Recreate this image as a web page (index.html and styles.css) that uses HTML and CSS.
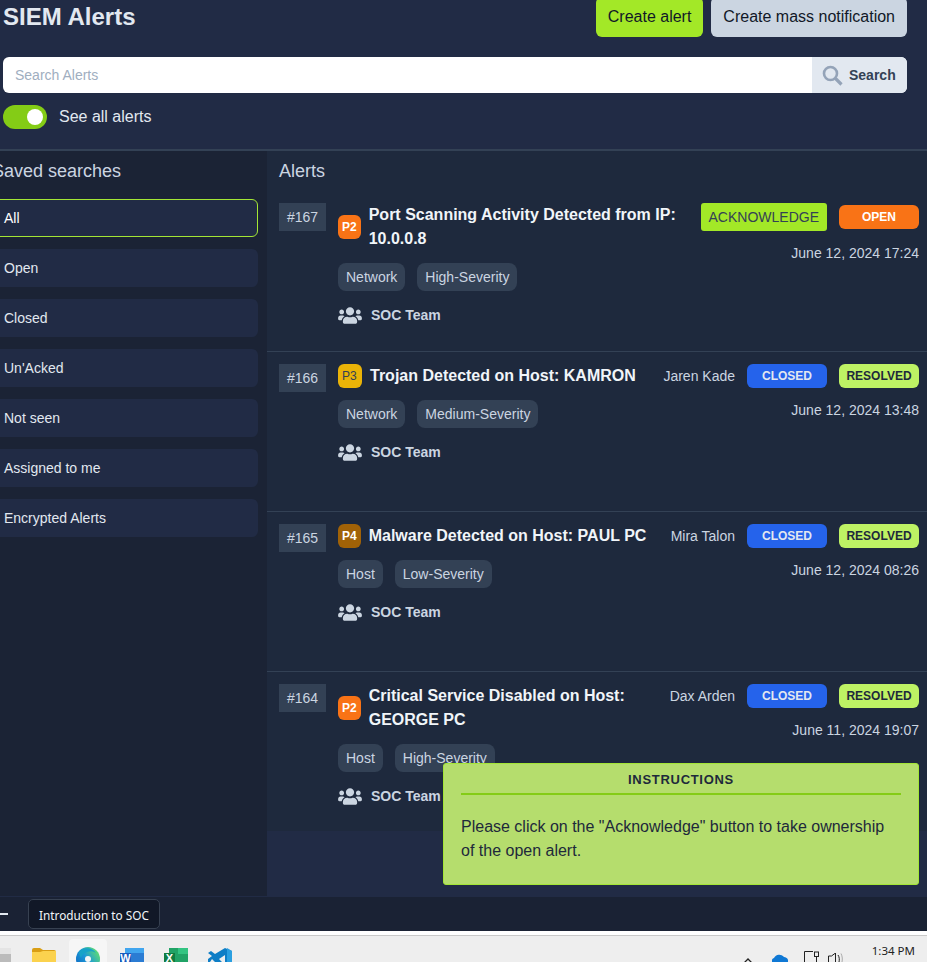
FILE: index.html
```html
<!DOCTYPE html>
<html lang="en">
<head>
    <meta charset="UTF-8">
    <title>SIEM Alerts</title>
    <link rel="stylesheet" href="styles.css">
</head>
<body>
    <svg class="icon-defs" width="0" height="0">
        <defs>
            <linearGradient id="edge-grad" x1="0" y1="1" x2="1" y2="0.3">
                <stop offset="0" stop-color="#0b5fc0"/>
                <stop offset="0.55" stop-color="#1c9ad6"/>
                <stop offset="1" stop-color="#5fdc74"/>
            </linearGradient>
        </defs>
        <symbol id="users" viewBox="0 0 640 512">
            <path d="M96 224c35.3 0 64-28.7 64-64s-28.7-64-64-64-64 28.7-64 64 28.7 64 64 64zm448 0c35.3 0 64-28.7 64-64s-28.7-64-64-64-64 28.7-64 64 28.7 64 64 64zm32 32h-64c-17.6 0-33.5 7.1-45.1 18.6 40.3 22.1 68.9 62 75.1 109.4h66c17.7 0 32-14.3 32-32v-32c0-35.3-28.7-64-64-64zm-256 0c61.9 0 112-50.1 112-112S381.9 32 320 32 208 82.1 208 144s50.1 112 112 112zm76.8 32h-8.3c-20.8 10-43.9 16-68.5 16s-47.6-6-68.5-16h-8.3C179.6 288 128 339.6 128 403.2V432c0 26.5 21.5 48 48 48h288c26.5 0 48-21.5 48-48v-28.8c0-63.6-51.6-115.2-115.2-115.2zm-223.7-13.4C161.5 263.1 145.6 256 128 256H64c-35.3 0-64 28.7-64 64v32c0 17.7 14.3 32 32 32h65.9c6.3-47.4 34.9-87.3 75.2-109.4z"/>
        </symbol>
    </svg>

    <div class="app">
        <!-- Page header -->
        <header class="page-header">
            <div class="title-row">
                <h1>SIEM Alerts</h1>
                <div class="title-buttons">
                    <button class="btn btn-lime">Create alert</button>
                    <button class="btn btn-grey">Create mass notification</button>
                </div>
            </div>
            <div class="search-bar">
                <div class="search-input">Search Alerts</div>
                <div class="search-btn">
                    <svg width="21" height="21" viewBox="0 0 21 21" fill="none" stroke="#94a3b8">
                        <circle cx="8.500" cy="8.500" r="6.500" stroke-width="2.600"/>
                        <path d="M13.500 13.500l6 6" stroke-width="3.200"/>
                    </svg>
                    <span>Search</span>
                </div>
            </div>
            <div class="toggle-row">
                <span class="toggle"><span class="toggle-knob"></span></span>
                <span>See all alerts</span>
            </div>
        </header>

        <main class="main">
            <!-- Saved searches -->
            <aside class="sidebar">
                <h2 class="sidebar-title">Saved searches</h2>
                <ul class="search-list">
                    <li class="search-item active">All</li>
                    <li class="search-item">Open</li>
                    <li class="search-item">Closed</li>
                    <li class="search-item">Un'Acked</li>
                    <li class="search-item">Not seen</li>
                    <li class="search-item">Assigned to me</li>
                    <li class="search-item">Encrypted Alerts</li>
                </ul>
            </aside>

            <!-- Alerts list -->
            <section class="alerts">
                <h2 class="alerts-title">Alerts</h2>

                <article class="alert">
                    <div class="alert-id">#167</div>
                    <div class="alert-body">
                        <div class="alert-head">
                            <span class="priority p2">P2</span>
                            <h3>Port Scanning Activity Detected from IP: 10.0.0.8</h3>
                        </div>
                        <div class="tags"><span class="tag">Network</span><span class="tag">High-Severity</span></div>
                        <div class="team"><svg class="team-icon"><use href="#users"/></svg><span>SOC Team</span></div>
                    </div>
                    <div class="alert-side">
                        <div class="status-row">
                            <button class="ack">ACKNOWLEDGE</button>
                            <span class="status open">OPEN</span>
                        </div>
                        <div class="alert-date">June 12, 2024 17:24</div>
                    </div>
                </article>

                <article class="alert">
                    <div class="alert-id">#166</div>
                    <div class="alert-body">
                        <div class="alert-head">
                            <span class="priority p3">P3</span>
                            <h3>Trojan Detected on Host: KAMRON</h3>
                        </div>
                        <div class="tags"><span class="tag">Network</span><span class="tag">Medium-Severity</span></div>
                        <div class="team"><svg class="team-icon"><use href="#users"/></svg><span>SOC Team</span></div>
                    </div>
                    <div class="alert-side">
                        <div class="status-row">
                            <span class="owner">Jaren Kade</span>
                            <span class="status closed">CLOSED</span>
                            <span class="status resolved">RESOLVED</span>
                        </div>
                        <div class="alert-date">June 12, 2024 13:48</div>
                    </div>
                </article>

                <article class="alert">
                    <div class="alert-id">#165</div>
                    <div class="alert-body">
                        <div class="alert-head">
                            <span class="priority p4">P4</span>
                            <h3>Malware Detected on Host: PAUL PC</h3>
                        </div>
                        <div class="tags"><span class="tag">Host</span><span class="tag">Low-Severity</span></div>
                        <div class="team"><svg class="team-icon"><use href="#users"/></svg><span>SOC Team</span></div>
                    </div>
                    <div class="alert-side">
                        <div class="status-row">
                            <span class="owner">Mira Talon</span>
                            <span class="status closed">CLOSED</span>
                            <span class="status resolved">RESOLVED</span>
                        </div>
                        <div class="alert-date">June 12, 2024 08:26</div>
                    </div>
                </article>

                <article class="alert alert-last">
                    <div class="alert-id">#164</div>
                    <div class="alert-body">
                        <div class="alert-head">
                            <span class="priority p2">P2</span>
                            <h3>Critical Service Disabled on Host: GEORGE PC</h3>
                        </div>
                        <div class="tags"><span class="tag">Host</span><span class="tag">High-Severity</span></div>
                        <div class="team"><svg class="team-icon"><use href="#users"/></svg><span>SOC Team</span></div>
                    </div>
                    <div class="alert-side">
                        <div class="status-row">
                            <span class="owner">Dax Arden</span>
                            <span class="status closed">CLOSED</span>
                            <span class="status resolved">RESOLVED</span>
                        </div>
                        <div class="alert-date">June 11, 2024 19:07</div>
                    </div>
                </article>
            </section>
        </main>

        <!-- Course footer -->
        <footer class="course-bar">
            <span class="course-dash"></span>
            <span class="course-pill">Introduction to SOC</span>
        </footer>

        <!-- Instructions popup -->
        <div class="instructions">
            <div class="instructions-title">INSTRUCTIONS</div>
            <p>Please click on the "Acknowledge" button to take ownership of the open alert.</p>
        </div>
    </div>

    <!-- Windows taskbar -->
    <div class="taskbar">
        <div class="task-icons">
            <span class="task-stub"></span>
            <svg class="task-icon folder" width="24" height="14" viewBox="0 0 24 14">
                <path d="M0 2a2 2 0 0 1 2-2h6l3 2h11a2 2 0 0 1 2 2v2H0z" fill="#d99e14"/>
                <path d="M0 4h8l3-1h13v11H0z" fill="#fbd24e"/>
            </svg>
            <span class="task-active">
                <svg width="24" height="15" viewBox="0 0 24 15">
                    <circle cx="12" cy="12" r="12" fill="url(#edge-grad)"/>
                    <path d="M3 5c4-5 13-5 17 1-3-2-6-2-9-1-3 1-5 3-6 6-1-2-2-4-2-6z" fill="#17a3c8"/>
                    <circle cx="12" cy="12" r="3" fill="#f6f6f6"/>
                </svg>
            </span>
            <svg class="task-icon" width="24" height="14" viewBox="0 0 24 14">
                <path d="M5 0h19v14H5z" fill="#2b7cd3"/>
                <path d="M5 0h19v5H5z" fill="#41a5ee"/>
                <path d="M0 5h11v9H0z" fill="#185abd"/>
                <text x="5.500" y="14" class="office-letter">W</text>
            </svg>
            <svg class="task-icon" width="24" height="14" viewBox="0 0 24 14">
                <path d="M5 0h19v14H5z" fill="#21a366"/>
                <path d="M14 0h10v6H14z" fill="#33c481"/>
                <path d="M0 5h11v9H0z" fill="#107c41"/>
                <text x="5.500" y="14" class="office-letter">X</text>
            </svg>
            <svg class="task-icon" width="24" height="14" viewBox="0 0 24 14">
                <path d="M17 0l7 3v11h-7V7l-6 4 3 3H7L4 11l-2 3H0v-3l4-3-4-3 3-2 4 3z" fill="#0e7ec6"/>
                <path d="M19 0l5 3v11h-5z" fill="#2a9fe0"/>
            </svg>
        </div>
        <div class="tray">
            <svg class="tray-chevron" width="12" height="8" viewBox="0 0 12 8" fill="none" stroke="#222" stroke-width="1.300">
                <path d="M1 7l5-5 5 5"/>
            </svg>
            <svg class="tray-cloud" width="16" height="8" viewBox="0 0 16 8">
                <path d="M0 8a3 3 0 0 1 2-4 6 6 0 0 1 10-1 4 4 0 0 1 4 5z" fill="#0f78d4"/>
            </svg>
            <svg class="tray-net" width="16" height="11" viewBox="0 0 16 11" fill="none" stroke="#222">
                <path d="M.5 11V.500H9"/>
                <rect x="10.500" y="1" width="4" height="4.500"/>
                <path d="M12.500 5.500V11"/>
            </svg>
            <svg class="tray-sound" width="16" height="9" viewBox="0 0 16 9" fill="none" stroke="#222">
                <path d="M.5 9V3h3l4-3v9"/>
                <path d="M10 2c1.500 2 1.500 5 1 7"/>
                <path d="M13 .500c1.500 3 1.500 6 1 8.500" stroke="#aaa"/>
            </svg>
            <span class="tray-clock">1:34 PM</span>
        </div>
    </div>
</body>
</html>
```

FILE: styles.css
```css
* {
    box-sizing: border-box;
}

body {
    font-family: "Liberation Sans", Arial, sans-serif;
    margin: 0;
    height: 962px;
    overflow: hidden;
    background-color: #ffffff;
}

.icon-defs {
    position: absolute;
}

.app {
    position: relative;
    height: 931px;
    display: flex;
    flex-direction: column;
    background-color: #212b45;
    overflow: hidden;
}

/* Page header */
.page-header {
    height: 151px;
    flex: none;
    padding: 0 20px 0 3px;
    border-bottom: 2px solid #334155;
}

.title-row {
    display: flex;
    justify-content: space-between;
    align-items: center;
    height: 40px;
    margin-top: -3px;
}

h1 {
    margin: 0;
    font-size: 24px;
    font-weight: bold;
    color: #e2e8f0;
}

.title-buttons {
    display: flex;
    gap: 8px;
}

.btn {
    height: 40px;
    padding: 0 12px;
    border: none;
    border-radius: 6px;
    font-family: inherit;
    font-size: 16px;
    color: #111827;
}

.btn-lime {
    background-color: #a3e827;
}

.btn-grey {
    background-color: #cbd5e1;
}

.search-bar {
    display: flex;
    height: 36px;
    margin-top: 20px;
    border-radius: 6px;
    overflow: hidden;
    background-color: #ffffff;
}

.search-input {
    flex: 1;
    padding-left: 12px;
    font-size: 14px;
    line-height: 36px;
    color: #a0aec0;
}

.search-btn {
    width: 95px;
    display: flex;
    align-items: center;
    gap: 6px;
    padding-left: 10px;
    background-color: #e2e8f0;
    color: #334155;
    font-size: 14px;
    font-weight: bold;
}

.toggle-row {
    display: flex;
    align-items: center;
    gap: 12px;
    margin-top: 12px;
    font-size: 16px;
    color: #e2e8f0;
}

.toggle {
    width: 44px;
    height: 24px;
    display: flex;
    align-items: center;
    justify-content: flex-end;
    padding-right: 4px;
    border-radius: 12px;
    background-color: #84cc16;
}

.toggle-knob {
    width: 16px;
    height: 16px;
    border-radius: 50%;
    background-color: #ffffff;
}

/* Main area */
.main {
    flex: 1;
    min-height: 0;
    display: flex;
}

.sidebar {
    width: 275px;
    flex: none;
    margin-left: -8px;
    padding: 6px 9px 0 0;
    background-color: #1b2335;
}

.sidebar-title {
    margin: 0 0 14px;
    font-size: 18px;
    font-weight: normal;
    line-height: 28px;
    color: #cbd5e1;
}

.search-list {
    margin: 0;
    padding: 0;
    list-style: none;
    display: flex;
    flex-direction: column;
    gap: 12px;
}

.search-item {
    height: 38px;
    padding-left: 11px;
    border: 1px solid transparent;
    border-radius: 6px;
    background-color: #212b45;
    font-size: 14px;
    line-height: 36px;
    color: #e2e8f0;
}

.search-item.active {
    border-color: #a3e635;
    color: #ffffff;
}

.alerts {
    flex: 1;
    min-width: 0;
}

.alerts-title {
    margin: 0;
    padding: 6px 0 6px 12px;
    background-color: #1e293d;
    font-size: 18px;
    font-weight: normal;
    line-height: 28px;
    color: #cbd5e1;
}

.alert {
    display: flex;
    gap: 12px;
    height: 160px;
    padding: 12px 8px 0 12px;
    border-bottom: 1px solid #334155;
    background-color: #1e293d;
}

.alert:first-of-type {
    height: 161px;
}

.alert-last {
    height: 159px;
    border-bottom: none;
}

.alert-id {
    width: 47px;
    height: 28px;
    flex: none;
    background-color: #334155;
    color: #cbd5e1;
    font-size: 14px;
    line-height: 28px;
    text-align: center;
}

.alert-body {
    flex: 1;
    min-width: 0;
}

.alert-head {
    display: flex;
    align-items: center;
    gap: 8px;
}

.alert-head h3 {
    margin: 0;
    font-size: 16px;
    font-weight: bold;
    line-height: 24px;
    color: #f1f5f9;
}

.priority {
    flex: none;
    height: 24px;
    padding: 0 4px;
    border-radius: 6px;
    font-size: 12px;
    font-weight: bold;
    line-height: 24px;
}

.p2 {
    background-color: #f97316;
    color: #ffffff;
}

.p3 {
    width: 24px;
    background-color: #eab308;
    color: #334155;
    font-weight: normal;
}

.p4 {
    background-color: #a16207;
    color: #ffffff;
}

.tags {
    display: flex;
    gap: 12px;
    margin-top: 12px;
}

.tag {
    height: 28px;
    padding: 0 8px;
    border-radius: 8px;
    background-color: #334155;
    color: #cbd5e1;
    font-size: 14px;
    line-height: 28px;
}

.team {
    display: flex;
    align-items: center;
    gap: 9px;
    height: 24px;
    margin-top: 12px;
    color: #cbd5e1;
    font-size: 14px;
    font-weight: bold;
}

.team-icon {
    width: 24px;
    height: 19px;
    fill: #cbd5e1;
}

.alert-side {
    flex: none;
    display: flex;
    flex-direction: column;
    align-items: flex-end;
}

.status-row {
    display: flex;
    align-items: center;
    gap: 12px;
}

.owner {
    font-size: 14px;
    color: #cbd5e1;
}

.ack {
    height: 28px;
    padding: 0 8px;
    border: none;
    border-radius: 3px;
    background-color: #a3e827;
    color: #334155;
    font-family: inherit;
    font-size: 14px;
}

.status {
    width: 80px;
    height: 24px;
    border-radius: 6px;
    font-size: 12px;
    font-weight: bold;
    line-height: 24px;
    text-align: center;
}

.open {
    background-color: #f97316;
    color: #ffffff;
}

.closed {
    background-color: #2563eb;
    color: #e2e8f0;
}

.resolved {
    background-color: #bef264;
    color: #1e293b;
}

.alert-date {
    margin-top: 12px;
    font-size: 14px;
    line-height: 20px;
    color: #cbd5e1;
}

/* Course footer */
.course-bar {
    height: 35px;
    flex: none;
    display: flex;
    align-items: center;
    border-top: 1px solid #212b45;
    background-color: #1a2234;
}

.course-dash {
    width: 8px;
    height: 2px;
    margin-right: 20px;
    background-color: #e2e8f0;
}

.course-pill {
    height: 30px;
    padding: 0 10px;
    border: 1px solid #374151;
    border-radius: 5px;
    background-color: #111827;
    color: #f1f5f9;
    font-family: "Noto Sans", sans-serif;
    font-size: 11.800px;
    line-height: 30px;
}

/* Instructions popup */
.instructions {
    position: absolute;
    left: 443px;
    top: 763px;
    width: 476px;
    height: 122px;
    padding: 0 17px;
    border: 1px solid #a3e635;
    border-radius: 3px;
    background-color: #b5dd6d;
    color: #1e293b;
}

.instructions-title {
    height: 31px;
    border-bottom: 2px solid #84cc16;
    font-size: 13px;
    font-weight: bold;
    line-height: 31px;
    letter-spacing: 0.700px;
    text-align: center;
}

.instructions p {
    margin: 20px 0 0;
    font-size: 16px;
    line-height: 24px;
}

/* Windows taskbar */
.taskbar {
    height: 27px;
    display: flex;
    justify-content: space-between;
    border-top: 1px solid #c9c9c9;
    margin-top: 4px;
    background-color: #eeeeee;
}

.task-icons {
    display: flex;
    align-items: flex-start;
}

.task-stub {
    width: 11px;
    height: 14px;
    margin-top: 12px;
    background: linear-gradient(#e4e4e4 40%, #bbbbbb 40%);
}

.task-icon {
    flex: none;
    margin: 12px 0 0 20px;
}

.folder {
    margin-left: 21px;
}

.task-active {
    width: 38px;
    height: 26px;
    margin: 3px 0 0 13px;
    padding: 8px 0 0 7px;
    border-radius: 4px 4px 0 0;
    background-color: #f6f6f6;
}

.task-active + .task-icon {
    margin-left: 13px;
}

.office-letter {
    font-family: "Liberation Sans", sans-serif;
    font-size: 11px;
    font-weight: bold;
    fill: #ffffff;
    text-anchor: middle;
}

.tray {
    display: flex;
    align-items: flex-start;
    padding-right: 12px;
}

.tray-chevron {
    margin-top: 21px;
    margin-right: 18px;
}

.tray-cloud {
    margin-top: 18px;
    margin-right: 16px;
}

.tray-net {
    margin-top: 15px;
}

.tray-sound {
    margin: 17px 28px 0 8px;
}

.tray-clock {
    margin-top: 7px;
    font-family: "Noto Sans", sans-serif;
    font-size: 11.500px;
    color: #222222;
}
```
